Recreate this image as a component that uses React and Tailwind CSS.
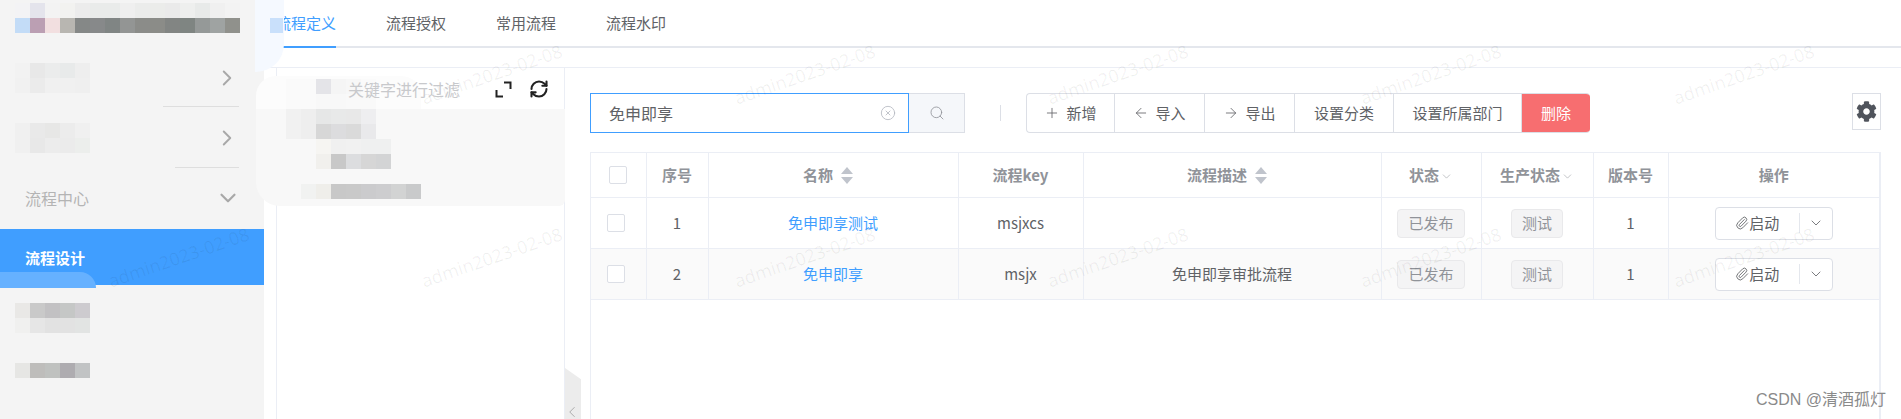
import React from "react";
import {
  ArrowLeft,
  ArrowRight,
  ChevronDown,
  ChevronLeft,
  ChevronRight,
  CircleX,
  Paperclip,
  Plus,
  RefreshCw,
  Search,
} from "lucide-react";
import { FaCog } from "react-icons/fa";

const FONT = '"Noto Sans CJK SC", "Noto Sans", sans-serif';

// Blurred (mosaic) areas of the screenshot, 15px cells
const Mosaic = ({ rows, className = "" }) => (
  <div className={`flex flex-col ${className}`}>
    {rows.map((row, i) => (
      <div key={i} className="flex h-[15px]">
        {row.map((color, j) => (
          <div key={j} className="w-[15px] h-[15px]" style={{ backgroundColor: color }} />
        ))}
      </div>
    ))}
  </div>
);

const logoRows = [
  ["#f3f3f5", "#e4e4ec", "#f3f3f3", "#f2f2f0", "#ececec", "#e9ebea", "#e9ebea", "#efefef", "#ebeceb", "#ebecea", "#eaeaea", "#eeefee", "#e8eae9", "#f0f0f0", "#f3f3f3"],
  ["#c3dcf7", "#bb9fb3", "#f2dfe0", "#b8b6b1", "#858887", "#87898a", "#808584", "#939594", "#8b8c89", "#8b8c88", "#828583", "#7f8582", "#959998", "#9fa3a2", "#90918c"],
];
const item1 = [
  ["#f2f2f2", "#e8e8e8", "#ebecec", "#e8eaea", "#eeeeee"],
  ["#f1f1f1", "#ebebeb", "#f0f0f0", "#f0f0f0", "#efefef"],
];
const item2 = [
  ["#f0f0f0", "#e9e9e9", "#e7e7e6", "#ececec", "#f0f0f0"],
  ["#f0f0f0", "#e8e8e8", "#ececec", "#ebebeb", "#eceeec"],
];
const item3 = [
  ["#e9e8e6", "#c9c9c9", "#c2c1c3", "#c5c7c6", "#cdcbcf"],
  ["#f0f0ef", "#e6e6e6", "#e2e2e2", "#e2e2e2", "#e2e4e3"],
];
const item4 = [["#e6e6e4", "#bebdbb", "#bfc1bf", "#aeacb0", "#c1c3c4"]];

const treeRows = [
  ["#fafafa", "#fafafa", "#e4e4e8", "#f5f5f5", "#f7f7f7", "#fafafa"],
  ["#fafafa", "#fafafa", "#f8f8f8", "#f8f8f8", "#f9f9f9", "#f9f9f9"],
  ["#f1f1f1", "#eeeeee", "#e6e7e7", "#e8e9e9", "#e8e8e8", "#eeeef0"],
  ["#f1f1f1", "#eeeeee", "#d7d7d7", "#dcdcde", "#dadada", "#e9e9eb"],
  ["#f8f8f8", "#f8f8f8", "#f6f5f2", "#f0f0f0", "#f1f1f1", "#eff0f0", "#eff0f0"],
  ["#f8f8f8", "#f8f8f8", "#f1f0ed", "#c8c8c8", "#dcdddf", "#d6d6d6", "#d3d4d5"],
  ["#f8f8f8"],
  ["#f8f8f8", "#f1f2f1", "#efeeea", "#c8c8c8", "#c9c9c9", "#cbcbcd", "#cdcdcf", "#d2d3d3", "#c9cacb"],
];

const SortCaret = () => (
  <svg width="12" height="17" viewBox="0 0 12 17" className="inline-block ml-2 mr-[10px] align-[-3px]">
    <path d="M6 0 12 7H0Z" fill="#c0c4cc" />
    <path d="M0 10H12L6 17Z" fill="#c0c4cc" />
  </svg>
);

// Fullscreen corners of the tree toolbar
const CornersIcon = () => (
  <svg width="17" height="17" viewBox="0 0 17 17" fill="none" stroke="#222" strokeWidth="2">
    <path d="M9 1.5h6.5V8" />
    <path d="M1.5 9v6.5H8" />
  </svg>
);

const ToolButton = ({ icon: Icon, children, className = "" }) => (
  <div className={`h-full flex items-center justify-center gap-[6px] border-r border-[#dcdfe6] text-[15px] text-[#606266] ${className}`}>
    {Icon && <Icon className="w-4 h-4" strokeWidth={1.25} />}
    <span>{children}</span>
  </div>
);

const Tag = ({ children }) => (
  <span className="inline-flex items-center justify-center h-[29px] px-[10px] rounded bg-[#f4f4f5] border border-[#e9e9eb] text-[15px] text-[#909399]">
    {children}
  </span>
);

const StartButton = () => (
  <div className="mx-auto flex items-center w-[118px] h-[33px] rounded border border-[#dcdfe6] bg-white text-[15px] text-[#606266]">
    <div className="w-[83px] flex items-center justify-center">
      <Paperclip className="w-[14px] h-[14px]" strokeWidth={1.5} />
      <span>启动</span>
    </div>
    <div className="flex-1 h-[20px] border-l border-[#e4e7ed] flex items-center justify-center">
      <ChevronDown className="w-4 h-4" strokeWidth={1.25} />
    </div>
  </div>
);

const Th = ({ children, className = "" }) => (
  <th className={`border border-[#ebeef5] font-bold text-[15px] text-[#909399] ${className}`}>{children}</th>
);

const Td = ({ children, className = "text-[#606266]" }) => (
  <td className={`border border-[#ebeef5] text-center text-[15px] ${className}`}>{children}</td>
);

const rows = [
  { no: 1, name: "免申即享测试", key: "msjxcs", desc: "" },
  { no: 2, name: "免申即享", key: "msjx", desc: "免申即享审批流程" },
];

const tabs = ["流程授权", "常用流程", "流程水印"];

export default function App() {
  return (
    <div className="relative flex h-[419px] w-[1901px] overflow-hidden bg-white" style={{ fontFamily: FONT }}>
      {/* Sidebar */}
      <aside className="relative w-[264px] shrink-0 bg-[#f4f4f4] flex flex-col">
        <Mosaic rows={logoRows} className="ml-[15px] mt-[3px]" />
        <div className="mt-[30px] h-[30px] pl-[15px] pr-[24px] flex items-center justify-between">
          <Mosaic rows={item1} />
          <ChevronRight className="w-[26px] h-[26px] text-[#a8a8a8]" strokeWidth={1.75} />
        </div>
        <div className="ml-[163px] mr-[25px] mt-[13px] border-t border-[#dedede]" />
        <div className="mt-[16px] h-[30px] pl-[15px] pr-[24px] flex items-center justify-between">
          <Mosaic rows={item2} />
          <ChevronRight className="w-[26px] h-[26px] text-[#a8a8a8]" strokeWidth={1.75} />
        </div>
        <div className="ml-[175px] mr-[25px] mt-[14px] border-t border-[#dedede]" />
        <div className="mt-[15px] h-[30px] pl-[25px] pr-[23px] flex items-center justify-between text-[16px] text-[#b4b4b4]">
          <span>流程中心</span>
          <ChevronDown className="w-[26px] h-[26px] text-[#a8a8a8]" strokeWidth={2} />
        </div>
        <div className="relative mt-[16px] h-[56px] bg-[#409eff] pl-[25px] pt-[2px] flex items-center text-[15px] font-bold text-white">
          流程设计
          <div className="absolute left-0 top-[43px] w-[96px] h-[16px] rounded-tr-[40px] bg-[#66b1ff]" />
        </div>
        <Mosaic rows={item3} className="ml-[15px] mt-[18px]" />
        <Mosaic rows={item4} className="ml-[15px] mt-[30px]" />
      </aside>

      {/* Soft edge of the blur next to the tabs */}
      <div className="absolute left-[255px] top-0 z-20 w-[29px] h-[72px] rounded-br-[28px] bg-[#f5f9ff]">
        <div className="ml-[15px] mt-[18px] w-[13px] h-[15px] bg-[#c9e0fb]" />
      </div>

      {/* Main */}
      <main className="flex-1 min-w-0 flex flex-col">
        {/* Tabs */}
        <div className="h-[48px] shrink-0 ml-[12px] flex border-b-2 border-[#e4e7ed] text-[15px] text-[#606266]">
          <div className="h-[48px] w-[60px] flex items-center border-b-2 border-[#409eff] text-[#409eff] -mb-[2px]">流程定义</div>
          {tabs.map((tab) => (
            <div key={tab} className="h-[46px] flex items-center ml-[50px]">{tab}</div>
          ))}
        </div>

        <div className="mt-[19px] flex-1 min-h-0 flex border-t border-[#ebeef5]">
          {/* Tree panel */}
          <section className="relative ml-[12px] w-[289px] shrink-0 border-x border-[#ebeef5]">
            <div className="absolute -left-[21px] top-[8px] z-20 w-[309px] h-[130px]">
              <div className="h-[33px] w-[165px] rounded-tl-[20px] rounded-tr-[20px] bg-[#fcfcfc]" />
              <div className="h-[97px] rounded-bl-[24px] rounded-br-[6px] bg-[#f8f8f8]" />
              <Mosaic rows={treeRows} className="absolute left-[30px] top-[3px]" />
            </div>
            <div className="relative z-30 flex items-center h-[42px] pl-[71px] text-[16px] text-[#c8c9cc]">
              <span>关键字进行过滤</span>
              <div className="ml-[35px]"><CornersIcon /></div>
              <RefreshCw className="ml-[17px] w-5 h-5 text-[#222]" strokeWidth={2.5} />
            </div>
          </section>

          {/* Table panel */}
          <section className="relative flex-1 min-w-0 pl-[25px] pr-[20px] flex flex-col">
            <div className="absolute left-0 bottom-0 w-[16px] h-[51px] bg-[#ececec] [clip-path:polygon(0_0,100%_22%,100%_100%,0_100%)] flex items-end">
              <ChevronLeft className="-ml-[2px] -mb-[3px] w-5 h-5 text-[#a8a8a8]" strokeWidth={1.25} />
            </div>

            {/* Toolbar */}
            <div className="mt-[25px] h-[40px] shrink-0 flex items-start">
              <div className="w-[319px] h-[40px] border border-[#409eff] pl-[18px] pr-[12px] flex items-center justify-between text-[16px] text-[#606266]">
                <span>免申即享</span>
                <CircleX className="w-4 h-4 text-[#b4b8c0]" strokeWidth={1.25} />
              </div>
              <div className="w-[56px] h-[40px] border border-l-0 border-[#dcdfe6] bg-[#f5f7fa] flex items-center justify-center">
                <Search className="w-4 h-4 text-[#909399]" strokeWidth={1.25} />
              </div>
              <div className="ml-[35px] mt-[12px] h-[16px] border-l border-[#dcdfe6]" />
              <div className="ml-[25px] h-[40px] flex border border-[#dcdfe6] border-r-0 rounded-[4px] overflow-hidden">
                <ToolButton icon={Plus} className="w-[88px]">新增</ToolButton>
                <ToolButton icon={ArrowLeft} className="w-[90px]">导入</ToolButton>
                <ToolButton icon={ArrowRight} className="w-[90px]">导出</ToolButton>
                <ToolButton className="w-[99px]">设置分类</ToolButton>
                <ToolButton className="w-[128px]">设置所属部门</ToolButton>
                <div className="w-[68px] h-full bg-[#f76e70] flex items-center justify-center text-[15px] text-white">删除</div>
              </div>
              <div className="ml-auto w-[29px] h-[37px] border border-[#dcdfe6] flex items-start justify-center pt-[7px]">
                <FaCog className="w-[21px] h-[21px] text-[#50545c]" />
              </div>
            </div>

            {/* Table */}
            <div className="mt-[19px] flex-1 min-h-0 border-x-2 border-l border-[#ebeef5]">
              <table className="w-full table-fixed border-collapse">
                <colgroup>
                  <col className="w-[55px]" />
                  <col className="w-[62px]" />
                  <col className="w-[250px]" />
                  <col className="w-[125px]" />
                  <col className="w-[298px]" />
                  <col className="w-[100px]" />
                  <col className="w-[112px]" />
                  <col className="w-[75px]" />
                  <col />
                </colgroup>
                <thead>
                  <tr className="h-[45px]">
                    <Th className="border-l-0">
                      <div className="mx-auto w-[18px] h-[18px] rounded-[2px] border border-[#dcdfe6] bg-white" />
                    </Th>
                    <Th>序号</Th>
                    <Th>名称<SortCaret /></Th>
                    <Th>流程key</Th>
                    <Th>流程描述<SortCaret /></Th>
                    <Th>
                      状态<ChevronDown className="inline-block w-[13px] h-[13px] ml-px" strokeWidth={1} />
                    </Th>
                    <Th>
                      生产状态<ChevronDown className="inline-block w-[13px] h-[13px] ml-px" strokeWidth={1} />
                    </Th>
                    <Th>版本号</Th>
                    <Th className="border-r-0">操作</Th>
                  </tr>
                </thead>
                <tbody>
                  {rows.map((row) => (
                    <tr key={row.no} className={`h-[51px] ${row.no === 2 ? "bg-[#fafafa]" : ""}`}>
                      <Td className="border-l-0">
                        <div className="ml-[16px] w-[18px] h-[18px] rounded-[2px] border border-[#dcdfe6] bg-white" />
                      </Td>
                      <Td>{row.no}</Td>
                      <Td className="text-[#409eff]">{row.name}</Td>
                      <Td>{row.key}</Td>
                      <Td>{row.desc}</Td>
                      <Td><Tag>已发布</Tag></Td>
                      <Td><Tag>测试</Tag></Td>
                      <Td>1</Td>
                      <Td className="border-r-0"><StartButton /></Td>
                    </tr>
                  ))}
                </tbody>
              </table>
            </div>
          </section>
        </div>
      </main>

      {/* Page watermark */}
      <div className="absolute left-[22px] -top-[17px] z-10 grid grid-cols-[repeat(6,313px)] auto-rows-[183px] pointer-events-none">
        {Array.from({ length: 12 }).map((_, i) => (
          <div key={i} className="flex items-center justify-center">
            {i > 0 && (
              <span className="-rotate-[19deg] text-[18px] text-black/[0.06] whitespace-nowrap" style={{ fontFamily: '"Noto Sans", sans-serif' }}>
                admin2023-02-08
              </span>
            )}
          </div>
        ))}
      </div>

      {/* CSDN stamp */}
      <div className="absolute right-[15px] bottom-[9px] z-10 text-[16px] leading-[20px] text-[#8a8a8a]" style={{ fontFamily: '"Liberation Sans", "Noto Sans CJK SC", sans-serif' }}>
        CSDN @清酒孤灯
      </div>
    </div>
  );
}
